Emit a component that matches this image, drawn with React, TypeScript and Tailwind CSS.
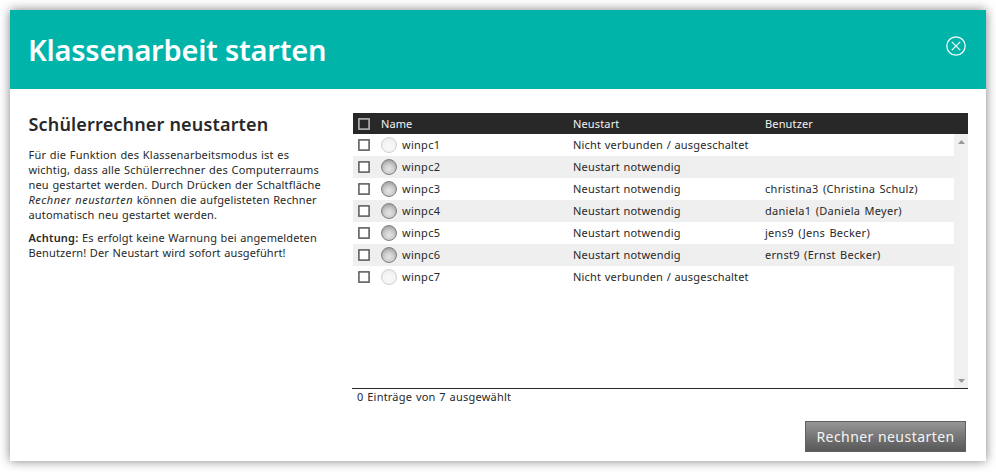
import React from 'react';

type Row = { name: string; status: string; user: string; online: boolean };

const rows: Row[] = [
  { name: 'winpc1', status: 'Nicht verbunden / ausgeschaltet', user: '', online: false },
  { name: 'winpc2', status: 'Neustart notwendig', user: '', online: true },
  { name: 'winpc3', status: 'Neustart notwendig', user: 'christina3 (Christina Schulz)', online: true },
  { name: 'winpc4', status: 'Neustart notwendig', user: 'daniela1 (Daniela Meyer)', online: true },
  { name: 'winpc5', status: 'Neustart notwendig', user: 'jens9 (Jens Becker)', online: true },
  { name: 'winpc6', status: 'Neustart notwendig', user: 'ernst9 (Ernst Becker)', online: true },
  { name: 'winpc7', status: 'Nicht verbunden / ausgeschaltet', user: '', online: false },
];

const columns = 'grid grid-cols-[28px_192px_192px_1fr] items-center';

function Checkbox({ header = false }: { header?: boolean }) {
  return (
    <svg
      className={header ? 'ml-[5px] block size-3 text-[#b4b4b4]' : 'ml-[5px] block size-3 text-[#606060]'}
      viewBox="0 0 12 12"
      fill={header ? 'none' : '#ffffff'}
      stroke="currentColor"
      strokeWidth="1.6"
    >
      <rect x="0.9" y="0.9" width="10.2" height="10.2" />
    </svg>
  );
}

function StatusBall({ online }: { online: boolean }) {
  return (
    <span
      className={
        online
          ? 'size-4 rounded-full border border-[#808080] bg-[radial-gradient(circle_at_50%_65%,#e6e6e6_0%,#cecece_40%,#969696_90%)]'
          : 'size-4 rounded-full border border-[#d0d0d0] bg-[radial-gradient(circle_at_50%_65%,#f8f8f8_0%,#f4f4f4_50%,#e6e6e6_100%)]'
      }
    />
  );
}

function Grid() {
  return (
    <div className="w-[616px] text-[11px] leading-[15px] tracking-[0.28px] [word-spacing:0.7px]">
      <div className={`${columns} ml-px h-[21px] bg-[#282828] text-[#f2f2f2]`}>
        <Checkbox header />
        <span className="tracking-[0.1px]">Name</span>
        <span className="tracking-[0.15px]">Neustart</span>
        <span className="tracking-[0.15px]">Benutzer</span>
      </div>
      <div className="flex h-[255px] border-b border-[#282828] pl-px">
        <div className="flex-1">
          {rows.map((row) => (
            <div key={row.name} className={`${columns} h-[22px] even:bg-[#efefef]`}>
              <Checkbox />
              <span className="flex items-center gap-[5px]">
                <StatusBall online={row.online} />
                <span className="pb-[2px]">{row.name}</span>
              </span>
              <span className="pb-[2px] tracking-[0.2px] [word-spacing:0.5px]">{row.status}</span>
              <span className="pb-[2px] [word-spacing:1.2px]">{row.user}</span>
            </div>
          ))}
        </div>
        <div className="flex w-[14px] flex-col items-center justify-between bg-[#f0f0f0] pt-[6px] pr-px pb-[5px] pl-[2px]">
          <svg width="7" height="4" viewBox="0 0 7 4" fill="#999999"><path d="M0 4 L3.5 0 L7 4Z" /></svg>
          <svg width="7" height="4" viewBox="0 0 7 4" fill="#999999"><path d="M0 0 L7 0 L3.5 4Z" /></svg>
        </div>
      </div>
      <p className="pl-[5px] tracking-[0.21px]">0 Einträge von 7 ausgewählt</p>
    </div>
  );
}

export default function App() {
  return (
    <div className="h-[472px] w-[996px] bg-white p-[10px] pb-[11px] font-['Noto_Sans',sans-serif] text-[#282828]">
      <main className="flex h-full flex-col bg-white shadow-[0_0_10px_rgba(0,0,0,0.5)]">
        <header className="flex h-[79px] shrink-0 items-start justify-between bg-[#00b4aa] pr-5 pl-[18px] text-white">
          <h1 className="pt-[20px] text-[29px] leading-[40px] font-semibold tracking-[-0.23px] whitespace-nowrap">Klassenarbeit starten</h1>
          <svg className="mt-[26px]" width="20" height="20" viewBox="0 0 20 20" fill="none" stroke="white" strokeWidth="1.2">
            <circle cx="10" cy="10" r="9.2" />
            <path d="M5.8 5.8 L14.2 14.2 M14.2 5.8 L5.8 14.2" />
          </svg>
        </header>
        <div className="flex pt-6 pl-[18px]">
          <section className="-mt-px w-[324px] shrink-0 pl-[0.5px] text-[11px] leading-[15px] tracking-[0.19px] whitespace-nowrap [word-spacing:0.6px]">
            <h2 className="mb-[11px] text-[18px] leading-6 font-semibold tracking-[0.17px] [word-spacing:0px]">Schülerrechner neustarten</h2>
            <p className="mb-2">
              <span className="tracking-[0.19px]">Für die Funktion des Klassenarbeitsmodus ist es</span><br />
              wichtig, dass alle Schülerrechner des Computerraums<br />
              <span className="tracking-[0.16px]">neu gestartet werden. Durch Drücken der Schaltfläche</span><br />
              <em className="tracking-[0.5px]">Rechner neustarten</em> <span className="tracking-[0.13px]">können die aufgelisteten Rechner</span><br />
              <span className="tracking-[0.16px]">automatisch neu gestartet werden.</span>
            </p>
            <p>
              <strong className="font-semibold">Achtung:</strong> <span className="tracking-[0.11px]">Es erfolgt keine Warnung bei angemeldeten</span><br />
              <span className="tracking-[0.12px]">Benutzern! Der Neustart wird sofort ausgeführt!</span>
            </p>
          </section>
          <Grid />
        </div>
        <footer className="mt-auto flex justify-end pr-5 pb-[9px]">
          <button className="h-[31px] w-[161px] border border-[#606060] bg-linear-to-b from-[#969696] to-[#585858] text-[14px] leading-[29px] tracking-[0.45px] whitespace-nowrap text-[#f4f4f4]">
            Rechner neustarten
          </button>
        </footer>
      </main>
    </div>
  );
}
